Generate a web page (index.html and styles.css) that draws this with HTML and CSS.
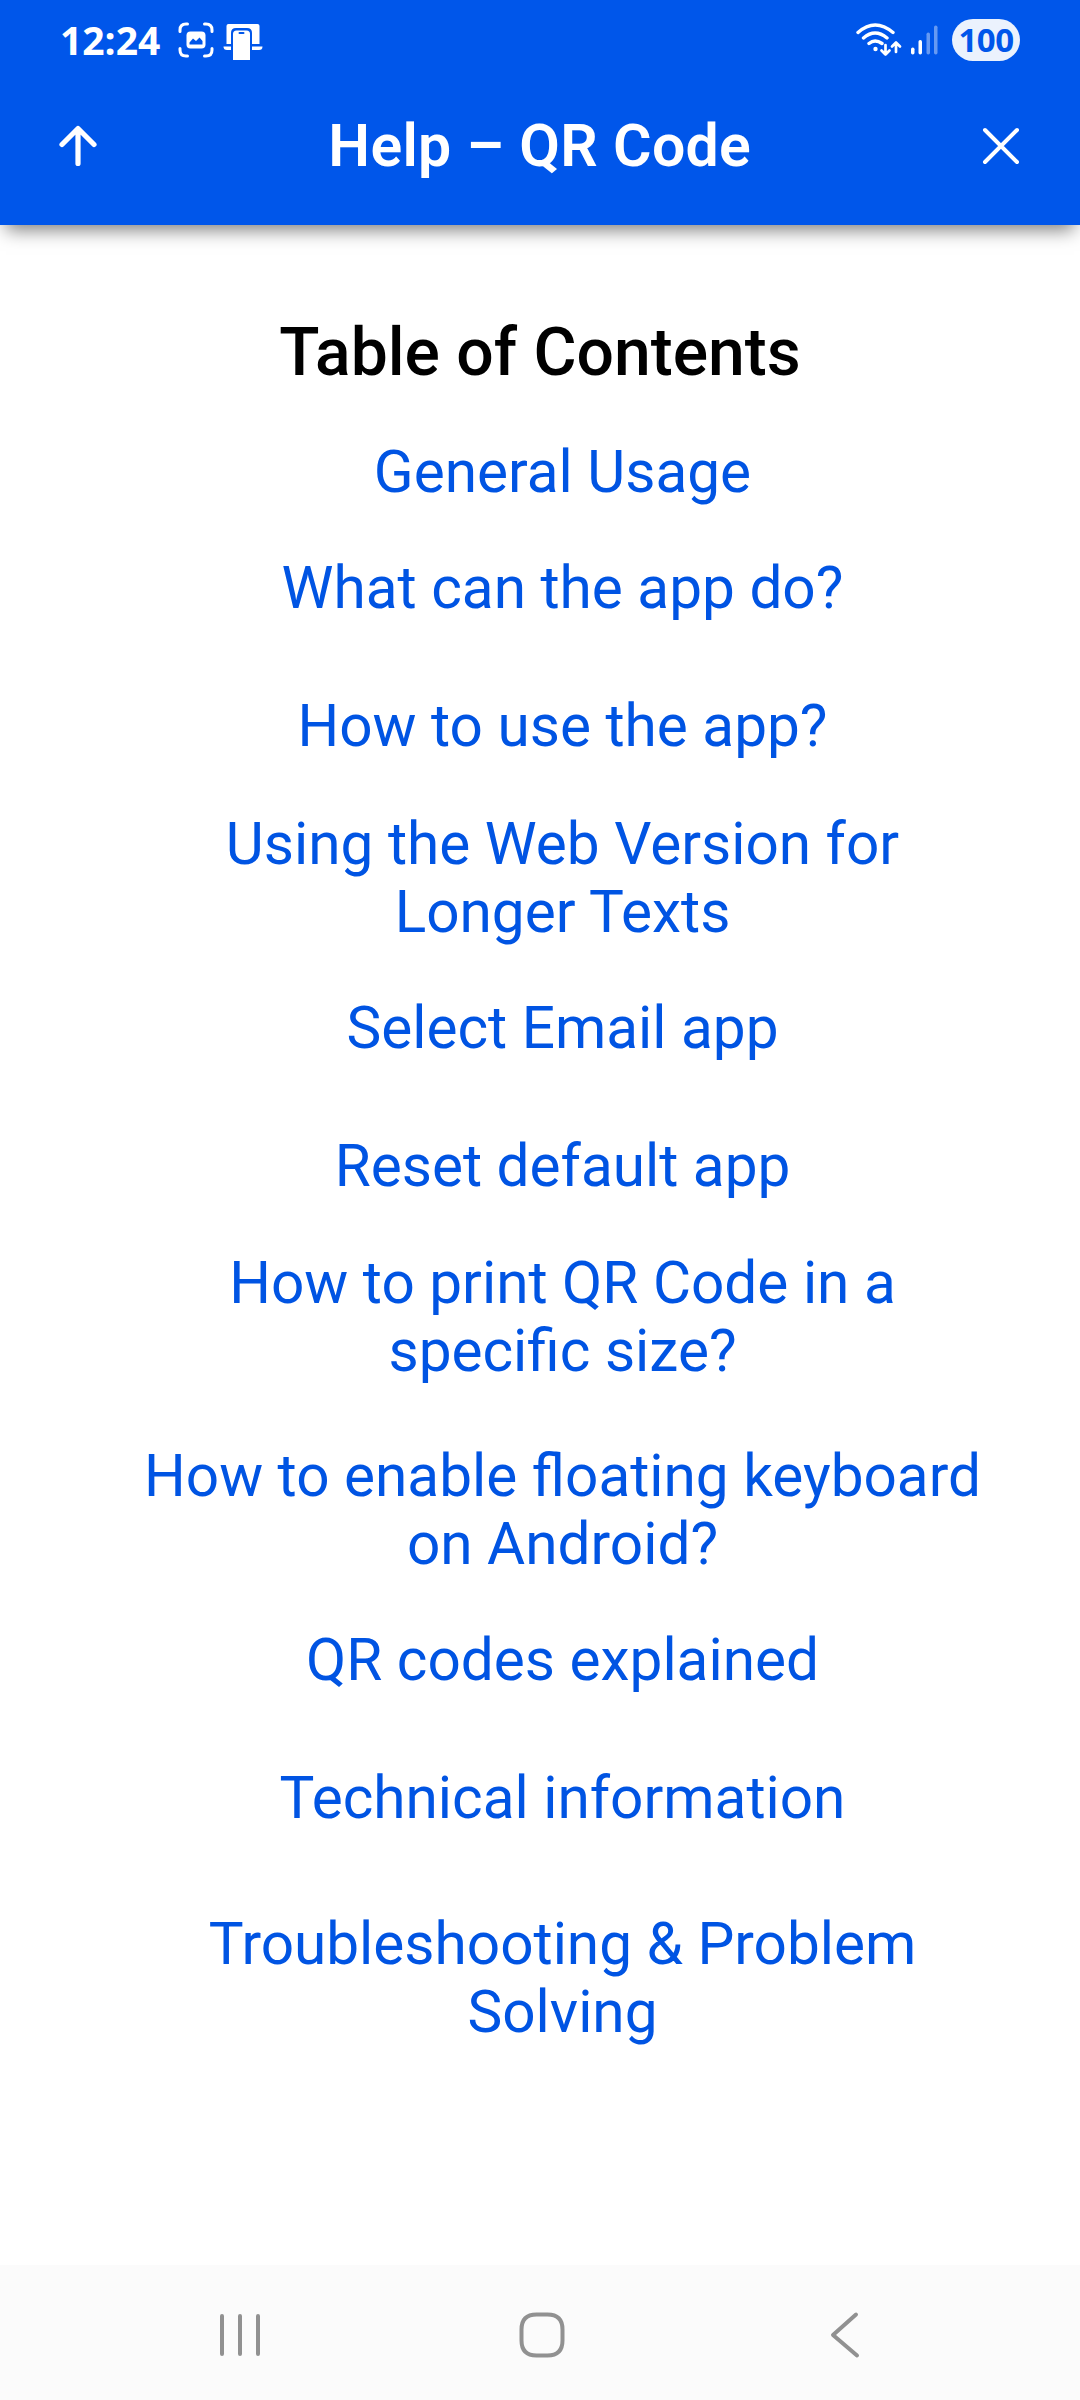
FILE: index.html
```html
<!DOCTYPE html>
<html lang="en">
<head>
<meta charset="utf-8">
<title>Help – QR Code</title>
<link rel="stylesheet" href="styles.css">
</head>
<body>
<header class="top">
  <div class="status">
    <div class="status-left">
      <span class="clock">12:24</span>
      <svg class="shot-icon" width="36" height="36" viewBox="0 0 36 36" fill="none" stroke="#fff" stroke-width="3" stroke-linecap="round">
        <path d="M2 9.500V8Q2 2 8 2H9.500M26.500 2H28Q34 2 34 8V9.500M34 26.500V28Q34 34 28 34H26.500M9.500 34H8Q2 34 2 28V26.500"/>
        <rect x="8.500" y="9.500" width="19" height="17" rx="4" fill="#fff" stroke="none"/>
        <path d="M11.500 22.500V20.500L15 16.500L18 19L21.500 15.500L24.500 19V22.500Z" fill="#0056ea" stroke="none"/>
      </svg>
      <svg class="link-icon" width="40" height="38" viewBox="0 0 40 38">
        <path d="M3.500 3Q3.500 1 5.500 1H34.500Q36.500 1 36.500 3V21H3.500Z" fill="#fff"/>
        <path d="M0.500 23.500H39.500Q39.500 27 36 27H4Q0.500 27 0.500 23.500Z" fill="#fff"/>
        <path d="M8 38V10Q8 5 13 5H24Q29 5 29 10V38Z" fill="#0056ea"/>
        <path d="M10 37V11Q10 7.500 13.500 7.500H23.500Q27 7.500 27 11V37Z" fill="#fff"/>
        <rect x="15.500" y="9" width="6" height="2" rx="1" fill="#0056ea"/>
      </svg>
    </div>
    <div class="status-right">
      <svg class="wifi" width="46" height="36" viewBox="0 0 46 36" fill="none" stroke="#fff" stroke-width="3.400" stroke-linecap="round">
        <path d="M2 10.500Q19 -4.500 37 10.500M7.500 16Q19 6 31 16M13 21.500Q19 16.500 26 21.500"/>
        <circle cx="19.500" cy="27" r="2.200" fill="#fff" stroke="none"/>
        <path d="M29.500 23V32.500M25.500 28.500L29.500 32.500L33.500 28.500M40 30V20.500M36 24.500L40 20.500L44 24.500" stroke-width="2.700" stroke-linejoin="round"/>
      </svg>
      <svg class="signal" width="28" height="30" viewBox="0 0 28 30" fill="#fff">
        <rect x="1" y="22.500" width="3.500" height="7" rx="1.700"/>
        <rect x="8.500" y="15" width="3.500" height="14.500" rx="1.700"/>
        <rect x="16.500" y="7.500" width="3.500" height="22" rx="1.700" opacity=".4"/>
        <rect x="24" y="0.500" width="3.500" height="29" rx="1.700" opacity=".4"/>
      </svg>
      <span class="battery">100</span>
    </div>
  </div>
  <div class="bar">
    <svg width="38" height="42" viewBox="0 0 38 42" fill="none" stroke="#fff" stroke-width="5.200" stroke-linecap="round" stroke-linejoin="round"><path d="M19 38.500V4M3 19.500L19 3.500L35 19.500"/></svg>
    <h1 class="title">Help – QR Code</h1>
    <svg width="38" height="38" viewBox="0 0 38 38" fill="none" stroke="#fff" stroke-width="4" stroke-linecap="round"><path d="M3 3L35 35M35 3L3 35"/></svg>
  </div>
</header>
<main class="page">
  <h2 class="heading">Table of Contents</h2>
  <nav class="toc">
    <a>General Usage</a>
    <a>What can the app do?</a>
    <a class="spaced">How to use the app?</a>
    <a class="wrapped">Using the Web Version for Longer Texts</a>
    <a>Select Email app</a>
    <a class="spaced">Reset default app</a>
    <a class="print">How to print QR Code in a specific size?</a>
    <a class="apart">How to enable floating keyboard on Android?</a>
    <a>QR codes explained</a>
    <a class="spaced">Technical information</a>
    <a class="section">Troubleshooting &amp; Problem Solving</a>
  </nav>
</main>
<footer class="navbar">
  <svg width="44" height="44" viewBox="0 0 44 44" stroke="#919191" stroke-width="4" stroke-linecap="round"><path d="M4 3V41M22 3V41M40 3V41"/></svg>
  <svg class="home" width="48" height="48" viewBox="0 0 48 48" fill="none" stroke="#919191" stroke-width="4"><path d="M18.500 3.500H29.500Q44.500 3.500 44.500 18.500V29.500Q44.500 44.500 29.500 44.500H18.500Q3.500 44.500 3.500 29.500V18.500Q3.500 3.500 18.500 3.500Z"/></svg>
  <svg width="32" height="48" viewBox="0 0 32 48" fill="none" stroke="#919191" stroke-width="4" stroke-linecap="round" stroke-linejoin="round"><path d="M27 3.500L4 24L28 44.500"/></svg>
</footer>
</body>
</html>
```
FILE: styles.css
```css
* { box-sizing: border-box; }
body {
  margin: 0;
  height: 2400px;
  display: flex;
  flex-direction: column;
  background: #fff;
  font-family: Roboto, "Liberation Sans", sans-serif;
}
svg { display: block; flex: none; }
.top {
  height: 225px;
  background: #0056ea;
  color: #fff;
  box-shadow: 0 11px 17px -6px rgba(0, 0, 0, .5);
}
.status {
  height: 80px;
  padding: 0 60px;
  display: flex;
  justify-content: space-between;
}
.status-left, .status-right { display: flex; align-items: flex-start; }
.clock {
  width: 118px;
  margin-top: 15px;
  font: 700 39px/50px "Open Sans", sans-serif;
  white-space: nowrap;
}
.shot-icon { margin-top: 22px; }
.link-icon { margin: 23px 0 0 9px; }
.wifi { margin: 22px 8px 0 0; }
.signal { margin: 25px 14px 0 0; }
.battery {
  width: 68px;
  height: 42px;
  margin-top: 19px;
  border-radius: 21px;
  background: #ebf2fd;
  color: #0056ea;
  font: 700 33px/41px "Open Sans", sans-serif;
  letter-spacing: -.5px;
  text-align: center;
}
.bar {
  height: 132px;
  padding: 0 59.5px 0 59px;
  display: flex;
  align-items: center;
  justify-content: space-between;
}
.title {
  margin: 0;
  font-size: 59px;
  font-weight: 600;
  line-height: 70px;
  letter-spacing: .3px;
}
.page { flex: 1; padding: 88px 45px 0; }
.heading {
  margin: 0;
  text-align: center;
  color: #000;
  font-size: 66px;
  font-weight: 500;
  line-height: 80px;
}
.toc {
  width: 855px;
  margin: 45px 0 0 90px;
  display: flex;
  flex-direction: column;
  gap: 48px;
  color: #0054e3;
  font-size: 58.5px;
  line-height: 68px;
  text-align: center;
}
.spaced { margin-top: 22px; }
.wrapped { margin-top: 2px; }
.print { margin-top: 1px; }
.apart { margin-top: 9px; }
.section { margin-top: 29.5px; }
.navbar {
  height: 135px;
  padding: 4px 219px 0 218px;
  display: flex;
  align-items: center;
  justify-content: space-between;
  background: #fbfbfb;
}
.home { margin-right: 7px; }
```
